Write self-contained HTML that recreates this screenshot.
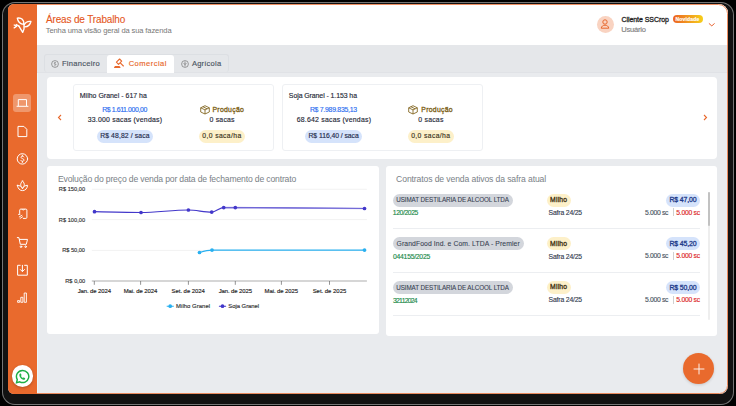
<!DOCTYPE html>
<html><head><meta charset="utf-8">
<style>
*{margin:0;padding:0;box-sizing:border-box}
html,body{width:736px;height:406px;overflow:hidden;background:#000}
body{position:relative;font-family:"Liberation Sans",sans-serif;color:#1f2937}
.a{position:absolute}
#frame{position:absolute;left:8px;top:4px;width:720px;height:390px;border-radius:6px 9px 8px 6px;background:#e9ebee;overflow:hidden}
#abs{position:absolute;left:-8px;top:-4px;width:736px;height:406px}
#side{position:absolute;left:8px;top:4px;width:29px;height:390px;background:#e96a2d}
#head{position:absolute;left:37px;top:4px;width:691px;height:41px;background:#fff}
.card{position:absolute;background:#fff;border-radius:4px}
.ic{position:absolute;left:8px;width:29px;height:18px;display:flex;align-items:center;justify-content:center}
.ic svg{width:12px;height:12px;fill:none;stroke:#fff;stroke-width:1.1;stroke-linecap:round;stroke-linejoin:round}
.t{position:absolute;white-space:nowrap;line-height:1}
.pill{position:absolute;border-radius:7px}
</style></head><body>
<div class="a" style="left:2px;top:2px;width:732px;height:403px;border:1px solid rgba(255,255,255,.42);border-radius:13px;background:rgba(255,255,255,.07)"></div>
<div id="frame"><div id="abs">
  <div id="side"></div>
  <div class="a" style="left:13.4px;top:94.1px;width:17.8px;height:17.8px;border-radius:3px;background:rgba(255,255,255,.3)"></div>
  <div class="a" style="left:37px;top:4px;width:1px;height:390px;background:#e9f9fc"></div>
  <svg class="a" style="left:0;top:0" width="40" height="406" viewBox="0 0 40 406" fill="none" stroke="#fff" stroke-width="1" stroke-linecap="round" stroke-linejoin="round">
    <g transform="translate(10 12)" stroke-width="1.35">
      <path d="M7.3 6.1C11.6 5.3 14.1 8 14 12.4C10.4 12.1 7.9 10 7.3 6.1Z"/>
      <path d="M14.3 12.7C15.5 10.2 18.6 9.2 20.9 9.5C20.3 12.6 17.8 14.7 14.6 14.9"/>
      <path d="M14 12.4C14.5 15.6 14 18.1 12.7 20.4L8.9 14.2"/>
      <path d="M4.2 13L6.7 14.3L4.2 15.9M6.2 12.5L9 14.2"/>
    </g>
    <!-- laptop -->
    <path d="M18.3 105.6V99.6H26.5V105.6M17 106.3H28"/>
    <!-- file -->
    <path d="M18.4 126.4H23.9L26.8 129.3V136.6H18.4Z"/>
    <!-- dollar -->
    <circle cx="22.4" cy="158.9" r="5.2"/>
    <path d="M23.9 156.9C23.6 156.4 23 156.1 22.4 156.1C21.6 156.1 21 156.6 21 157.3C21 158.9 24 158.3 24 160C24 160.8 23.3 161.3 22.4 161.3C21.7 161.3 21.1 160.9 20.8 160.4M22.4 155.2V156.1M22.4 161.3V162.5" stroke-width=".9"/>
    <!-- lotus -->
    <path d="M22.5 181C23.8 182.3 24.3 183.6 24.3 184.8C24.3 186 23.5 187.3 22.5 188C21.5 187.3 20.7 186 20.7 184.8C20.7 183.6 21.2 182.3 22.5 181Z"/>
    <path d="M17.4 185.3C19.8 185.3 21.6 186.5 22.5 188.8C23.4 186.5 25.2 185.3 27.6 185.3C27.2 188.6 25.2 190.6 22.5 190.6C19.8 190.6 17.8 188.6 17.4 185.3Z"/>
    <!-- device -->
    <path d="M19.7 213.5V210.1C19.7 209.5 20.1 209.1 20.7 209.1H25.9C26.5 209.1 26.9 209.5 26.9 210.1V217.4C26.9 218 26.5 218.4 25.9 218.4H23.3"/>
    <path d="M22.2 209.3L22.7 210H24L24.4 209.3" stroke-width=".7"/>
    <path d="M18.5 214.4H19.9M19.3 216.9L21.9 215.3M20.1 218.4L22.6 216.8" stroke-width=".9"/>
    <!-- cart -->
    <path d="M17.3 237.6H18.9L20.3 244.3H26.3L27.5 239.4H19.5"/>
    <circle cx="21" cy="246.7" r=".8"/><circle cx="25.6" cy="246.7" r=".8"/>
    <!-- download box -->
    <path d="M20.2 265.3H17.6V275.2H27.3V265.3H24.6"/>
    <path d="M22.4 265.3V271.4M20.3 269.5L22.4 271.6L24.5 269.5"/>
    <!-- bars -->
    <path d="M18 302.3H19.6V300.6H18ZM21.2 302.3H22.9V297.3H21.2ZM24.6 302.3H26.4V293H24.6Z" stroke-width=".9"/>
  </svg>
  <div class="a" style="left:11.65px;top:365.35px;width:21.4px;height:21.4px;border-radius:50%;background:#fff;box-shadow:0 1px 3px rgba(0,0,0,.25)"></div>
  <svg class="a" style="left:14.6px;top:368.7px" width="15.2" height="15.2" viewBox="0 0 14 14">
    <path d="M7 1.3a5.6 5.6 0 0 0-4.9 8.4L1.4 12.6l3-.8A5.6 5.6 0 1 0 7 1.3z" fill="none" stroke="#1fae45" stroke-width="1.35"/>
    <path d="M5 4.2c.3 0 .5.1.6.4l.4 1c0 .2 0 .3-.2.5l-.3.3c.4.8 1 1.4 1.8 1.8l.3-.3c.2-.2.3-.2.5-.1l1 .4c.2.1.3.3.3.5 0 .7-.6 1.2-1.3 1.2C6.3 9.9 4.1 7.7 4 5.5 4 4.8 4.5 4.2 5 4.2z" fill="#25b34a"/>
  </svg>

  <div id="head"></div>
  <div class="a" style="left:596.8px;top:16.1px;width:17px;height:17px;border-radius:50%;background:#f9d3c1"></div>
  <svg class="a" style="left:599.3px;top:18.4px" width="12" height="12" viewBox="0 0 12 12" fill="none" stroke="#e8692d" stroke-width="1"><circle cx="6" cy="4" r="2.2"/><path d="M2.2 10.2c.4-2 1.8-3 3.8-3s3.4 1 3.8 3z"/></svg>
  <div class="pill" style="left:673px;top:15px;width:30px;height:7.9px;border-radius:4px;background:linear-gradient(90deg,#ec6223,#f6cf1a)"></div>
  <svg class="a" style="left:708px;top:22px" width="8" height="6" viewBox="0 0 8 6" fill="none" stroke="#e5531c" stroke-width=".9"><path d="M.9 1.4L3.8 3.9L6.6 1.4"/></svg>

  <!-- tabs -->
  <div class="a" style="left:37px;top:45px;width:691px;height:27.5px;background:#e5e7ea;border-bottom:1px solid #e0e2e6"></div>
  <div class="a" style="left:44px;top:54.4px;width:184.5px;height:18.1px;border-radius:3px;background:#e5e7ea;border:1px solid #dcdfe3;border-bottom:0"></div>
  <div class="a" style="left:107px;top:55px;width:67px;height:18px;border-radius:3px 3px 0 0;background:#fff"></div>
  <svg class="a" style="left:51px;top:60px" width="8" height="8" viewBox="0 0 8 8" fill="none" stroke="#777" stroke-width=".7"><circle cx="4" cy="4" r="3.4"/><path d="M4.9 3c-.2-.3-.5-.4-.9-.4-.5 0-.8.3-.8.6s.4.5.8.6.9.3.9.7-.4.6-.9.6c-.4 0-.7-.2-.9-.5M4 2v.5M4 5.7v.5"/></svg>
  <svg class="a" style="left:108px;top:54px" width="24" height="18" viewBox="0 0 24 18" fill="none" stroke="#e8692d" stroke-width="1.1" stroke-linecap="round" stroke-linejoin="round">
    <path d="M8.4 8.2L11.6 5L13.7 7.1L10.5 10.3Z"/>
    <path d="M12.5 9.1L15.4 12"/>
    <path d="M6.6 13.4L7.3 12.6H11.3L12 13.4Z"/>
  </svg>
  <svg class="a" style="left:180.6px;top:59.6px" width="8" height="8" viewBox="0 0 8 8" fill="none" stroke="#777" stroke-width=".7"><circle cx="4" cy="4" r="3.4"/><path d="M4 1.5v5M2.5 3.5c.5.2 1 .5 1.5 1M5.5 3.5c-.5.2-1 .5-1.5 1"/></svg>

  <!-- top card -->
  <div class="card" style="left:47.1px;top:76.9px;width:670.2px;height:81.9px"></div>
  <svg class="a" style="left:57px;top:114px" width="5" height="7" viewBox="0 0 5 7" fill="none" stroke="#e8692d" stroke-width="1.1"><path d="M4 1L1.5 3.5 4 6"/></svg>
  <svg class="a" style="left:703px;top:114px" width="5" height="7" viewBox="0 0 5 7" fill="none" stroke="#e8692d" stroke-width="1.1"><path d="M1 1l2.5 2.5L1 6"/></svg>
  <div class="card" style="left:72.5px;top:84.4px;width:201.9px;height:66.9px;border:1px solid #eef0f3;border-radius:3px"></div>
  <div class="pill" style="left:96.9px;top:129.8px;width:56.3px;height:12.9px;background:#d5e3fb"></div>
  <svg class="a" style="left:199.5px;top:104.5px" width="10" height="10" viewBox="0 0 10 10" fill="none" stroke="#80621a" stroke-width=".85" stroke-linejoin="round"><path d="M5 .7L9.3 2.8V7L5 9L.7 7V2.8Z M.7 2.8L5 4.9L9.3 2.8 M5 4.9V9 M2.8 1.7L7.1 3.8"/></svg>
  <div class="pill" style="left:198.8px;top:129.8px;width:46.4px;height:12.9px;background:#fdf0c9"></div>
  <div class="card" style="left:281.6px;top:84.4px;width:201.1px;height:66.9px;border:1px solid #eef0f3;border-radius:3px"></div>
  <div class="pill" style="left:305.2px;top:129.8px;width:57.1px;height:12.9px;background:#d5e3fb"></div>
  <svg class="a" style="left:408.3px;top:104.5px" width="10" height="10" viewBox="0 0 10 10" fill="none" stroke="#80621a" stroke-width=".85" stroke-linejoin="round"><path d="M5 .7L9.3 2.8V7L5 9L.7 7V2.8Z M.7 2.8L5 4.9L9.3 2.8 M5 4.9V9 M2.8 1.7L7.1 3.8"/></svg>
  <div class="pill" style="left:407.6px;top:129.8px;width:46.4px;height:12.9px;background:#fdf0c9"></div>

  <!-- chart card -->
  <div class="card" style="left:47.1px;top:166.2px;width:332.3px;height:168.1px;border-radius:3px"></div>
  <svg class="a" style="left:0;top:0" width="736" height="406" viewBox="0 0 736 406">
    <g stroke="#ececec" stroke-width=".7">
      <path d="M91.8 189.3H366.9M91.8 219.6H366.9M91.8 250.4H366.9"/>
    </g>
    <path d="M91.8 281H366.9" stroke="#c8c8c8" stroke-width="1.6"/>
    <g stroke="#666" stroke-width=".7">
      <path d="M94.3 281v3.8M140.6 281v3.8M188.4 281v3.8M235.3 281v3.8M281.4 281v3.8M329.5 281v3.8"/>
    </g>
    <path d="M94.5 211.7C110.00 212.10 125.50 212.50 141 212.5C156.80 212.50 172.60 210.00 188.4 210C196.17 210.00 203.93 212.10 211.7 212.1C215.70 212.10 219.70 207.60 223.7 207.6C227.57 207.60 231.43 207.60 235.3 207.6C278.37 207.60 321.43 208.05 364.5 208.5" fill="none" stroke="#4338ca" stroke-width="1.2"/>
    <path d="M223.7 207.6L235.3 207.6L364.5 208.5" fill="none" stroke="#8f87e0" stroke-width="1.6" opacity=".6"/>
    <g fill="#4338ca"><circle cx="94.5" cy="211.7" r="1.85"/><circle cx="141" cy="212.5" r="1.85"/><circle cx="188.4" cy="210" r="1.85"/><circle cx="211.7" cy="212.1" r="1.85"/><circle cx="223.7" cy="207.6" r="1.85"/><circle cx="235.3" cy="207.6" r="1.85"/><circle cx="364.5" cy="208.5" r="1.85"/></g>
    <path d="M199.5 252.5C203.67 251.30 207.83 250.10 212 250.1C262.83 250.10 313.67 250.10 364.5 250.1" fill="none" stroke="#29b0f0" stroke-width="1.1"/>
    <g fill="#29b0f0"><circle cx="199.5" cy="252.5" r="1.85"/><circle cx="212" cy="250.1" r="1.85"/><circle cx="364.5" cy="250.1" r="1.85"/></g>
    <path d="M166.7 306.2h7.1" stroke="#29b0f0" stroke-width="1.1"/><circle cx="170.2" cy="306.2" r="1.85" fill="#29b0f0"/>
    <path d="M218.9 306.2h7.2" stroke="#4338ca" stroke-width="1.1"/><circle cx="222.5" cy="306.2" r="1.85" fill="#4338ca"/>
  </svg>

  <!-- contracts card -->
  <div class="card" style="left:385.7px;top:166.2px;width:331.6px;height:169.9px;border-radius:3px"></div>
  <div class="a" style="left:707.6px;top:191.8px;width:2.7px;height:128px;background:#eeeeee;border-radius:1px"></div>
  <div class="a" style="left:707.6px;top:191.8px;width:2.7px;height:34.7px;background:#c2c2c2;border-radius:1px"></div>
  <div class="pill" style="left:393px;top:193.50px;width:119.8px;height:13px;background:#d3d6dc"></div>
  <div class="pill" style="left:546.9px;top:193.50px;width:24.1px;height:13px;background:#fdf0c9"></div>
  <div class="pill" style="left:666.2px;top:193.50px;width:33.9px;height:13px;background:#d5e3fb"></div>
  <div class="a" style="left:672.5px;top:208.40px;width:.7px;height:8.1px;background:#d0d0d0"></div>
  <div class="a" style="left:393px;top:228.00px;width:307px;height:.7px;background:#eceef1"></div>
  <div class="pill" style="left:393px;top:237.20px;width:130.6px;height:13px;background:#d3d6dc"></div>
  <div class="pill" style="left:546.9px;top:237.20px;width:24.1px;height:13px;background:#fdf0c9"></div>
  <div class="pill" style="left:666.2px;top:237.20px;width:33.9px;height:13px;background:#d5e3fb"></div>
  <div class="a" style="left:672.5px;top:252.10px;width:.7px;height:8.1px;background:#d0d0d0"></div>
  <div class="a" style="left:393px;top:271.70px;width:307px;height:.7px;background:#eceef1"></div>
  <div class="pill" style="left:393px;top:280.90px;width:119.8px;height:13px;background:#d3d6dc"></div>
  <div class="pill" style="left:546.9px;top:280.90px;width:24.1px;height:13px;background:#fdf0c9"></div>
  <div class="pill" style="left:666.2px;top:280.90px;width:33.9px;height:13px;background:#d5e3fb"></div>
  <div class="a" style="left:672.5px;top:295.80px;width:.7px;height:8.1px;background:#d0d0d0"></div>
  <div class="a" style="left:393px;top:315.40px;width:307px;height:.7px;background:#eceef1"></div>
  <div class="t" style="left:46.00px;top:15.00px;font-size:10px;letter-spacing:-0.156px;color:#e5561b;-webkit-text-stroke:0.1px currentColor;">Áreas de Trabalho</div>
  <div class="t" style="left:45.75px;top:26.91px;font-size:7.56px;letter-spacing:-0.109px;color:#777777;-webkit-text-stroke:0px currentColor;">Tenha uma visão geral da sua fazenda</div>
  <div class="t" style="left:621.45px;top:16.01px;font-size:7px;letter-spacing:-0.054px;color:#1f1f1f;-webkit-text-stroke:0.3px currentColor;">Cliente SSCrop</div>
  <div class="t" style="left:621.20px;top:25.51px;font-size:7.56px;letter-spacing:-0.225px;color:#808080;-webkit-text-stroke:0.15px currentColor;">Usuário</div>
  <div class="t" style="left:61.90px;top:59.91px;font-size:7.56px;letter-spacing:0.278px;color:#4b5563;-webkit-text-stroke:0.15px currentColor;">Financeiro</div>
  <div class="t" style="left:128.65px;top:59.91px;font-size:7.56px;letter-spacing:0.475px;color:#e8692d;-webkit-text-stroke:0.15px currentColor;">Comercial</div>
  <div class="t" style="left:191.90px;top:59.91px;font-size:7.56px;letter-spacing:0.221px;color:#4b5563;-webkit-text-stroke:0.15px currentColor;">Agrícola</div>
  <div class="t" style="left:79.80px;top:93.11px;font-size:6.91px;letter-spacing:0.030px;color:#1f2937;-webkit-text-stroke:0.15px currentColor;">Milho Granel - 617 ha</div>
  <div class="t" style="left:102.20px;top:106.82px;font-size:6.91px;letter-spacing:-0.393px;color:#2b6cf0;-webkit-text-stroke:0.15px currentColor;">R$ 1.611.000,00</div>
  <div class="t" style="left:87.75px;top:116.61px;font-size:6.91px;letter-spacing:0.217px;color:#1f2937;-webkit-text-stroke:0.15px currentColor;">33.000 sacas (vendas)</div>
  <div class="t" style="left:100.20px;top:133.11px;font-size:6.8px;letter-spacing:0.118px;color:#1e2a4a;-webkit-text-stroke:0.15px currentColor;">R$ 48,82 / saca</div>
  <div class="t" style="left:212.50px;top:106.91px;font-size:6.91px;letter-spacing:0.257px;color:#7d5f16;-webkit-text-stroke:0.3px currentColor;">Produção</div>
  <div class="t" style="left:209.55px;top:116.70px;font-size:6.91px;letter-spacing:0.200px;color:#1f2937;-webkit-text-stroke:0.15px currentColor;">0 sacas</div>
  <div class="t" style="left:202.35px;top:133.32px;font-size:6.8px;letter-spacing:0.370px;color:#3b3320;-webkit-text-stroke:0.15px currentColor;">0,0 saca/ha</div>
  <div class="t" style="left:288.85px;top:93.11px;font-size:6.91px;letter-spacing:-0.064px;color:#1f2937;-webkit-text-stroke:0.15px currentColor;">Soja Granel - 1.153 ha</div>
  <div class="t" style="left:309.90px;top:106.82px;font-size:6.91px;letter-spacing:-0.279px;color:#2b6cf0;-webkit-text-stroke:0.15px currentColor;">R$ 7.989.835,13</div>
  <div class="t" style="left:296.65px;top:116.61px;font-size:6.91px;letter-spacing:0.223px;color:#1f2937;-webkit-text-stroke:0.15px currentColor;">68.642 sacas (vendas)</div>
  <div class="t" style="left:308.50px;top:133.11px;font-size:6.8px;letter-spacing:-0.047px;color:#1e2a4a;-webkit-text-stroke:0.15px currentColor;">R$ 116,40 / saca</div>
  <div class="t" style="left:421.30px;top:106.91px;font-size:6.91px;letter-spacing:0.257px;color:#7d5f16;-webkit-text-stroke:0.3px currentColor;">Produção</div>
  <div class="t" style="left:418.35px;top:116.70px;font-size:6.91px;letter-spacing:0.200px;color:#1f2937;-webkit-text-stroke:0.15px currentColor;">0 sacas</div>
  <div class="t" style="left:411.15px;top:133.32px;font-size:6.8px;letter-spacing:0.370px;color:#3b3320;-webkit-text-stroke:0.15px currentColor;">0,0 saca/ha</div>
  <div class="t" style="left:57.95px;top:174.61px;font-size:8.64px;letter-spacing:-0.168px;color:#7a7f87;-webkit-text-stroke:0px currentColor;">Evolução do preço de venda por data de fechamento de contrato</div>
  <div class="t" style="left:396.10px;top:174.50px;font-size:8.64px;letter-spacing:-0.122px;color:#7a7f87;-webkit-text-stroke:0px currentColor;">Contratos de venda ativos da safra atual</div>
  <div class="t" style="left:675.55px;top:16.90px;font-size:5px;letter-spacing:0.164px;color:#ffffff;font-weight:700;-webkit-text-stroke:0.15px currentColor;">Novidade</div>
  <div class="t" style="left:58.85px;top:186.81px;font-size:5.62px;letter-spacing:0.038px;color:#333333;-webkit-text-stroke:0.15px currentColor;">R$ 150,00</div>
  <div class="t" style="left:58.85px;top:217.51px;font-size:5.62px;letter-spacing:0.038px;color:#333333;-webkit-text-stroke:0.15px currentColor;">R$ 100,00</div>
  <div class="t" style="left:62.25px;top:248.20px;font-size:5.62px;letter-spacing:-0.014px;color:#333333;-webkit-text-stroke:0.15px currentColor;">R$ 50,00</div>
  <div class="t" style="left:65.25px;top:278.91px;font-size:5.62px;letter-spacing:0.058px;color:#333333;-webkit-text-stroke:0.15px currentColor;">R$ 0,00</div>
  <div class="t" style="left:176.05px;top:304.31px;font-size:5.94px;letter-spacing:0.032px;color:#333333;-webkit-text-stroke:0.15px currentColor;">Milho Granel</div>
  <div class="t" style="left:228.35px;top:304.31px;font-size:5.94px;letter-spacing:-0.060px;color:#333333;-webkit-text-stroke:0.15px currentColor;">Soja Granel</div>
  <div class="t" style="left:77.70px;top:289.00px;font-size:5.94px;letter-spacing:-0.095px;color:#222222;-webkit-text-stroke:0.15px currentColor;">Jan. de 2024</div>
  <div class="t" style="left:123.75px;top:289.00px;font-size:5.94px;letter-spacing:-0.073px;color:#222222;-webkit-text-stroke:0.15px currentColor;">Mai. de 2024</div>
  <div class="t" style="left:171.55px;top:289.00px;font-size:5.94px;letter-spacing:-0.027px;color:#222222;-webkit-text-stroke:0.15px currentColor;">Set. de 2024</div>
  <div class="t" style="left:218.70px;top:289.00px;font-size:5.94px;letter-spacing:-0.095px;color:#222222;-webkit-text-stroke:0.15px currentColor;">Jan. de 2025</div>
  <div class="t" style="left:264.55px;top:289.00px;font-size:5.94px;letter-spacing:-0.073px;color:#222222;-webkit-text-stroke:0.15px currentColor;">Mai. de 2025</div>
  <div class="t" style="left:312.65px;top:289.00px;font-size:5.94px;letter-spacing:-0.005px;color:#222222;-webkit-text-stroke:0.15px currentColor;">Set. de 2025</div>
  <div class="t" style="left:396.30px;top:197.11px;font-size:6.3px;letter-spacing:-0.106px;color:#374151;-webkit-text-stroke:0.08px currentColor;">USIMAT DESTILARIA DE ALCOOL LTDA</div>
  <div class="t" style="left:392.80px;top:210.11px;font-size:6.8px;letter-spacing:-0.393px;color:#1b8a4a;-webkit-text-stroke:0.15px currentColor;">120/2025</div>
  <div class="t" style="left:550.10px;top:197.01px;font-size:6.8px;letter-spacing:0.188px;color:#3d3012;-webkit-text-stroke:0.3px currentColor;">Milho</div>
  <div class="t" style="left:548.55px;top:209.91px;font-size:6.8px;letter-spacing:-0.155px;color:#374151;-webkit-text-stroke:0.15px currentColor;">Safra 24/25</div>
  <div class="t" style="left:669.50px;top:197.11px;font-size:6.91px;letter-spacing:-0.129px;color:#1e3a8a;-webkit-text-stroke:0.3px currentColor;">R$ 47,00</div>
  <div class="t" style="left:644.95px;top:209.61px;font-size:6.8px;letter-spacing:-0.314px;color:#4b5563;-webkit-text-stroke:0.15px currentColor;">5.000 sc</div>
  <div class="t" style="left:676.35px;top:209.61px;font-size:6.8px;letter-spacing:-0.286px;color:#dc2626;-webkit-text-stroke:0.15px currentColor;">5.000 sc</div>
  <div class="t" style="left:396.55px;top:240.82px;font-size:6.8px;letter-spacing:0.100px;color:#374151;-webkit-text-stroke:0.08px currentColor;">GrandFood Ind. e Com. LTDA - Premier</div>
  <div class="t" style="left:393.05px;top:253.82px;font-size:6.8px;letter-spacing:-0.255px;color:#1b8a4a;-webkit-text-stroke:0.15px currentColor;">044155/2025</div>
  <div class="t" style="left:550.10px;top:240.70px;font-size:6.8px;letter-spacing:0.188px;color:#3d3012;-webkit-text-stroke:0.3px currentColor;">Milho</div>
  <div class="t" style="left:548.55px;top:253.61px;font-size:6.8px;letter-spacing:-0.155px;color:#374151;-webkit-text-stroke:0.15px currentColor;">Safra 24/25</div>
  <div class="t" style="left:669.50px;top:240.82px;font-size:6.91px;letter-spacing:-0.129px;color:#1e3a8a;-webkit-text-stroke:0.3px currentColor;">R$ 45,20</div>
  <div class="t" style="left:644.95px;top:253.32px;font-size:6.8px;letter-spacing:-0.314px;color:#4b5563;-webkit-text-stroke:0.15px currentColor;">5.000 sc</div>
  <div class="t" style="left:676.35px;top:253.32px;font-size:6.8px;letter-spacing:-0.286px;color:#dc2626;-webkit-text-stroke:0.15px currentColor;">5.000 sc</div>
  <div class="t" style="left:396.30px;top:284.51px;font-size:6.3px;letter-spacing:-0.106px;color:#374151;-webkit-text-stroke:0.08px currentColor;">USIMAT DESTILARIA DE ALCOOL LTDA</div>
  <div class="t" style="left:393.05px;top:297.51px;font-size:6.8px;letter-spacing:-0.743px;color:#1b8a4a;-webkit-text-stroke:0.15px currentColor;">32112024</div>
  <div class="t" style="left:550.10px;top:284.41px;font-size:6.8px;letter-spacing:0.188px;color:#3d3012;-webkit-text-stroke:0.3px currentColor;">Milho</div>
  <div class="t" style="left:548.55px;top:297.32px;font-size:6.8px;letter-spacing:-0.155px;color:#374151;-webkit-text-stroke:0.15px currentColor;">Safra 24/25</div>
  <div class="t" style="left:669.50px;top:284.51px;font-size:6.91px;letter-spacing:-0.129px;color:#1e3a8a;-webkit-text-stroke:0.3px currentColor;">R$ 50,00</div>
  <div class="t" style="left:644.95px;top:297.01px;font-size:6.8px;letter-spacing:-0.314px;color:#4b5563;-webkit-text-stroke:0.15px currentColor;">5.000 sc</div>
  <div class="t" style="left:676.35px;top:297.01px;font-size:6.8px;letter-spacing:-0.286px;color:#dc2626;-webkit-text-stroke:0.15px currentColor;">5.000 sc</div>
</div></div>
<div class="a" style="left:7.6px;top:3.6px;width:720.8px;height:390.8px;border-radius:6.5px 9.5px 8.5px 6.5px;border:1px solid rgba(232,105,45,.75)"></div>
<div class="a" style="left:683px;top:353px;width:31px;height:31px;border-radius:50%;background:#e96a2d;box-shadow:0 1px 3px rgba(0,0,0,.15)"></div>
<svg class="a" style="left:692.5px;top:362.5px" width="12" height="12" viewBox="0 0 12 12" stroke="#fff" stroke-width=".9"><path d="M6 .6v10.8M.6 6h10.8"/></svg>
</body></html>
